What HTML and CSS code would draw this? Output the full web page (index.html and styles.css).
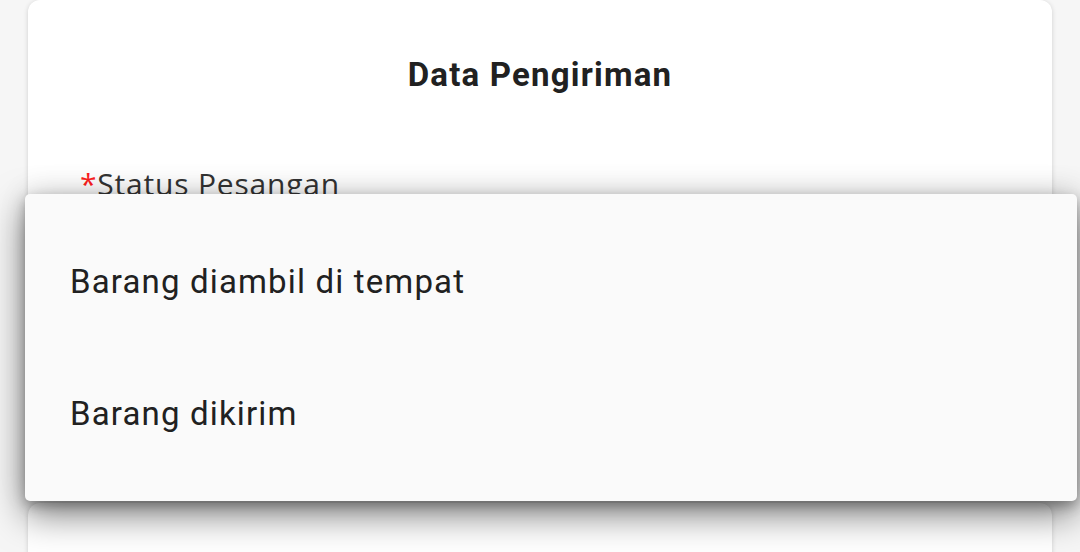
FILE: index.html
```html
<!DOCTYPE html>
<html>
<head>
<meta charset="utf-8">
<link rel="stylesheet" href="styles.css">
</head>
<body>
<div class="page">
  <section class="card card-main">
    <h1 class="title">Data Pengiriman</h1>
    <div class="field">
      <label class="label"><span class="req">*</span>Status Pesangan</label>
      <div class="input"></div>
    </div>
  </section>
  <section class="card card-next"></section>
</div>
<div class="menu">
  <div class="menu-item">Barang diambil di tempat</div>
  <div class="menu-item">Barang dikirim</div>
</div>
</body>
</html>
```
FILE: styles.css
```css
html, body {
  margin: 0;
  padding: 0;
}
body {
  background: #f6f6f6;
  font-family: Roboto, "Liberation Sans", sans-serif;
  width: 1080px;
  height: 552px;
  overflow: hidden;
  position: relative;
}
.page {
  padding: 0 28px;
  display: flex;
  flex-direction: column;
  gap: 13px;
}
.card {
  background: #ffffff;
  border-radius: 12px;
  box-shadow: 0 1px 5px rgba(0, 0, 0, 0.16);
}
.card-main {
  height: 490px;
  display: flex;
  flex-direction: column;
}
.card-next {
  height: 120px;
}
.title {
  margin: 0;
  padding-top: 55px;
  text-align: center;
  font-size: 33px;
  font-weight: 700;
  letter-spacing: 1.2px;
  color: #212121;
  line-height: 40px;
}
.field {
  padding: 71px 0 0 52px;
}
.label {
  font-family: "Open Sans", "Liberation Sans", sans-serif;
  font-size: 30px;
  letter-spacing: 0.8px;
  color: #333333;
  line-height: 36px;
  display: block;
}
.req {
  color: #ff1f1f;
  margin-right: 0;
}
.menu {
  position: absolute;
  top: 194px;
  left: 25px;
  width: 1052px;
  height: 307px;
  box-sizing: border-box;
  padding: 21px 0 22px;
  background: #fafafa;
  border-radius: 5px;
  box-shadow: 0 14px 36px rgba(0, 0, 0, 0.5), 0 5px 12px rgba(0, 0, 0, 0.25), 0 -4px 30px rgba(0, 0, 0, 0.08);
}
.menu-item {
  height: 132px;
  display: flex;
  align-items: center;
  padding-left: 45px;
  font-size: 33px;
  letter-spacing: 1.15px;
  color: #212121;
}
```
